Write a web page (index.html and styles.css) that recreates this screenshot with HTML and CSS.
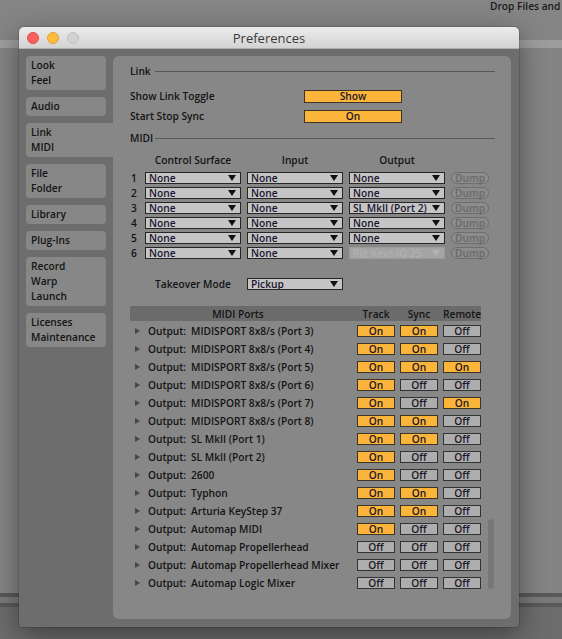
FILE: index.html
```html
<!DOCTYPE html>
<html lang="en">
<head>
  <meta charset="UTF-8">
  <title>Preferences</title>
  <link rel="stylesheet" href="styles.css">
</head>
<body>
  <!-- desktop behind the dialog -->
  <div class="desktop">
    <div class="desk-top"><span>Drop Files and</span></div>
    <div class="desk-band"></div>
    <div class="desk-main"></div>
    <div class="desk-line"></div>
    <div class="desk-gap"></div>
    <div class="desk-line"></div>
    <div class="desk-bottom"></div>
  </div>

  <div class="window">
    <div class="titlebar">
      <div class="lights">
        <span class="light red"></span>
        <span class="light yellow"></span>
        <span class="light gray"></span>
      </div>
      <div class="title">Preferences</div>
      <div class="lights"></div>
    </div>

    <div class="win-body">
      <!-- Tabs -->
      <div class="tabs">
        <div class="tab">Look<br>Feel</div>
        <div class="tab">Audio</div>
        <div class="tab active">Link<br>MIDI</div>
        <div class="tab">File<br>Folder</div>
        <div class="tab">Library</div>
        <div class="tab">Plug-Ins</div>
        <div class="tab">Record<br>Warp<br>Launch</div>
        <div class="tab">Licenses<br>Maintenance</div>
      </div>

      <div class="panel">
        <div class="sec-head"><span>Link</span><i></i></div>
        <div class="set-row first">
          <div class="set-label">Show Link Toggle</div>
          <div class="toggle">Show</div>
        </div>
        <div class="set-row">
          <div class="set-label">Start Stop Sync</div>
          <div class="toggle">On</div>
        </div>

        <div class="sec-head midi"><span>MIDI</span><i></i></div>
        <div class="col-heads">
          <div>Control Surface</div>
          <div>Input</div>
          <div>Output</div>
        </div>
        <div class="ms-rows">
          <div class="ms-row"><span class="num">1</span><div class="dd">None</div><div class="dd">None</div><div class="dd">None</div><div class="dump">Dump</div></div>
          <div class="ms-row"><span class="num">2</span><div class="dd">None</div><div class="dd">None</div><div class="dd">None</div><div class="dump">Dump</div></div>
          <div class="ms-row"><span class="num">3</span><div class="dd">None</div><div class="dd">None</div><div class="dd">SL MkII (Port 2)</div><div class="dump">Dump</div></div>
          <div class="ms-row"><span class="num">4</span><div class="dd">None</div><div class="dd">None</div><div class="dd">None</div><div class="dump">Dump</div></div>
          <div class="ms-row"><span class="num">5</span><div class="dd">None</div><div class="dd">None</div><div class="dd">None</div><div class="dump">Dump</div></div>
          <div class="ms-row"><span class="num">6</span><div class="dd">None</div><div class="dd">None</div><div class="dd disabled">Rig Keys IO 25</div><div class="dump">Dump</div></div>
        </div>

        <div class="takeover">
          <div class="takeover-label">Takeover Mode</div>
          <div class="dd">Pickup</div>
        </div>

        <div class="ports-wrap">
          <div class="ports">
            <div class="ports-head">
              <div class="h-name">MIDI Ports</div>
              <div class="h-col">Track</div>
              <div class="h-col">Sync</div>
              <div class="h-col">Remote</div>
            </div>
            <div class="port"><i class="arrow"></i><span class="kind">Output:</span><span class="pname">MIDISPORT 8x8/s (Port 3)</span><b class="on">On</b><b class="on">On</b><b>Off</b></div>
            <div class="port"><i class="arrow"></i><span class="kind">Output:</span><span class="pname">MIDISPORT 8x8/s (Port 4)</span><b class="on">On</b><b class="on">On</b><b>Off</b></div>
            <div class="port"><i class="arrow"></i><span class="kind">Output:</span><span class="pname">MIDISPORT 8x8/s (Port 5)</span><b class="on">On</b><b class="on">On</b><b class="on">On</b></div>
            <div class="port"><i class="arrow"></i><span class="kind">Output:</span><span class="pname">MIDISPORT 8x8/s (Port 6)</span><b class="on">On</b><b>Off</b><b>Off</b></div>
            <div class="port"><i class="arrow"></i><span class="kind">Output:</span><span class="pname">MIDISPORT 8x8/s (Port 7)</span><b class="on">On</b><b>Off</b><b class="on">On</b></div>
            <div class="port"><i class="arrow"></i><span class="kind">Output:</span><span class="pname">MIDISPORT 8x8/s (Port 8)</span><b class="on">On</b><b class="on">On</b><b>Off</b></div>
            <div class="port"><i class="arrow"></i><span class="kind">Output:</span><span class="pname">SL MkII (Port 1)</span><b class="on">On</b><b class="on">On</b><b>Off</b></div>
            <div class="port"><i class="arrow"></i><span class="kind">Output:</span><span class="pname">SL MkII (Port 2)</span><b class="on">On</b><b>Off</b><b>Off</b></div>
            <div class="port"><i class="arrow"></i><span class="kind">Output:</span><span class="pname">2600</span><b class="on">On</b><b>Off</b><b>Off</b></div>
            <div class="port"><i class="arrow"></i><span class="kind">Output:</span><span class="pname">Typhon</span><b class="on">On</b><b class="on">On</b><b>Off</b></div>
            <div class="port"><i class="arrow"></i><span class="kind">Output:</span><span class="pname">Arturia KeyStep 37</span><b class="on">On</b><b class="on">On</b><b>Off</b></div>
            <div class="port"><i class="arrow"></i><span class="kind">Output:</span><span class="pname">Automap MIDI</span><b class="on">On</b><b>Off</b><b>Off</b></div>
            <div class="port"><i class="arrow"></i><span class="kind">Output:</span><span class="pname">Automap Propellerhead</span><b>Off</b><b>Off</b><b>Off</b></div>
            <div class="port"><i class="arrow"></i><span class="kind">Output:</span><span class="pname">Automap Propellerhead Mixer</span><b>Off</b><b>Off</b><b>Off</b></div>
            <div class="port"><i class="arrow"></i><span class="kind">Output:</span><span class="pname">Automap Logic Mixer</span><b>Off</b><b>Off</b><b>Off</b></div>
          </div>
          <div class="scroll"><div class="thumb"></div></div>
        </div>
      </div>
    </div>
  </div>
</body>
</html>
```

FILE: styles.css
```css
* {
  box-sizing: border-box;
}
body {
  margin: 0;
  width: 562px;
  height: 639px;
  overflow: hidden;
  position: relative;
  background: #858585;
  font-family: "Open Sans", "Noto Sans", sans-serif;
  font-size: 10.2px;
  font-weight: 600;
  color: #141414;
}

/* desktop */
.desk-top {
  height: 40px;
  padding-left: 490px;
  white-space: nowrap;
  font-size: 10.2px;
  line-height: 12px;
  color: #1a1a1a;
}
.desk-top span {
  display: block;
}
.desk-band {
  height: 8px;
  background: #9d9d9d;
}
.desk-main {
  height: 545px;
  background: #848484;
}
.desk-line {
  height: 4px;
  background: #595959;
}
.desk-gap {
  height: 6px;
  background: #7a7a7a;
}
.desk-bottom {
  height: 32px;
  background: #6c6c6c;
}

/* window */
.window {
  position: absolute;
  left: 19px;
  top: 27px;
  width: 500px;
  height: 600px;
  display: flex;
  flex-direction: column;
  background: #6d6d6d;
  border-radius: 5px 5px 3px 3px;
  overflow: hidden;
  box-shadow: 0 8px 28px rgba(0, 0, 0, 0.42), 0 0 0 1px rgba(0, 0, 0, 0.12);
}
.titlebar {
  height: 22px;
  flex: none;
  display: flex;
  align-items: center;
  background: linear-gradient(#ececec, #d3d3d3);
  border-bottom: 1px solid #b0b0b0;
}
.lights {
  width: 72px;
  display: flex;
  gap: 8px;
  padding-left: 8px;
}
.light {
  width: 12px;
  height: 12px;
  border-radius: 50%;
}
.light.red {
  background: #fc605c;
  border: 1px solid #df4a46;
}
.light.yellow {
  background: #fdbc40;
  border: 1px solid #dea134;
}
.light.gray {
  background: #d2d2d2;
  border: 1px solid #c0c0c0;
}
.title {
  flex: 1;
  text-align: center;
  font-size: 13px;
  font-weight: 400;
  color: #3a3a3a;
}

.win-body {
  flex: 1;
  display: flex;
  gap: 7px;
  padding: 7px 8px 8px 7px;
}

/* tabs */
.tabs {
  width: 80px;
  flex: none;
  display: flex;
  flex-direction: column;
  gap: 7px;
}
.tab {
  background: #878787;
  border-radius: 4px;
  padding: 2px 5px;
  line-height: 15px;
  font-weight: 600;
  color: #141414;
}
.tab.active {
  margin-right: -7px;
  border-radius: 4px 0 0 4px;
}

/* panel */
.panel {
  flex: 1;
  background: #878787;
  border-radius: 6px;
  padding: 7px 16px 0 17px;
}
.sec-head {
  display: flex;
  align-items: center;
  height: 16px;
}
.sec-head span {
  width: 25px;
}
.sec-head i {
  flex: 1;
  height: 1px;
  background: #575757;
}
.sec-head.midi {
  margin-top: 4px;
}
.set-row {
  display: flex;
  align-items: center;
  height: 20px;
}
.set-row.first {
  margin-top: 7px;
}
.set-label {
  width: 174px;
}
.toggle {
  width: 98px;
  height: 13px;
  line-height: 11px;
  text-align: center;
  background: #fbb53a;
  border: 1px solid #3d3424;
  color: #1c1626;
}

.col-heads {
  margin-top: 6px;
  height: 16px;
  display: flex;
  gap: 6px;
  padding-left: 15px;
  align-items: center;
}
.col-heads div {
  width: 96px;
  text-align: center;
}
.ms-rows {
  margin-top: 2px;
}
.ms-row {
  height: 15px;
  display: flex;
  align-items: center;
  gap: 6px;
}
.num {
  width: 9px;
  padding-left: 1px;
}
.dd {
  width: 96px;
  height: 12px;
  line-height: 10px;
  padding-left: 3px;
  background: #c5c5c5;
  border: 1px solid #262626;
  color: #1c1430;
  position: relative;
  white-space: nowrap;
  overflow: hidden;
}
.dd::after {
  content: "";
  position: absolute;
  right: 4px;
  top: 2px;
  border-left: 4px solid transparent;
  border-right: 4px solid transparent;
  border-top: 6px solid #111;
}
.dd.disabled {
  background: #a4a4a4;
  border-color: #9c9c9c;
  color: #b1b1b1;
}
.dd.disabled::after {
  border-top-color: #b3b3b3;
}
.dump {
  width: 38px;
  height: 12px;
  line-height: 10px;
  text-align: center;
  border: 1px solid #6e6e6e;
  border-radius: 6px;
  background: #8c8c8c;
  color: #6a6a6a;
}

.takeover {
  margin-top: 16px;
  height: 15px;
  display: flex;
  align-items: center;
  gap: 6px;
  padding-left: 15px;
}
.takeover-label {
  width: 96px;
  text-align: center;
}

/* ports table */
.ports-wrap {
  margin-top: 15px;
  display: flex;
}
.ports {
  width: 351px;
}
.ports-head {
  height: 15px;
  display: flex;
  align-items: center;
  background: #6b6b6b;
  margin-bottom: 1px;
}
.h-name {
  flex: 1;
  text-align: center;
  padding-right: 6px;
}
.h-col {
  width: 38px;
  margin-left: 5px;
  text-align: center;
}
.port {
  height: 18px;
  display: flex;
  align-items: center;
}
.arrow {
  width: 0;
  height: 0;
  margin-left: 5px;
  border-top: 3.5px solid transparent;
  border-bottom: 3.5px solid transparent;
  border-left: 5px solid #474747;
}
.kind {
  width: 43px;
  margin-left: 8px;
}
.pname {
  flex: 1;
  white-space: nowrap;
}
.port b {
  width: 38px;
  height: 12px;
  margin-left: 5px;
  line-height: 10px;
  text-align: center;
  font-weight: 600;
  background: #adadad;
  border: 1px solid #333;
  color: #1c1626;
}
.port b.on {
  background: #fbb53a;
  border-color: #3d3424;
}
.scroll {
  width: 6px;
  margin-left: 7px;
}
.thumb {
  margin-top: 213px;
  height: 70px;
  border-radius: 3px;
  background: #777;
}
```
